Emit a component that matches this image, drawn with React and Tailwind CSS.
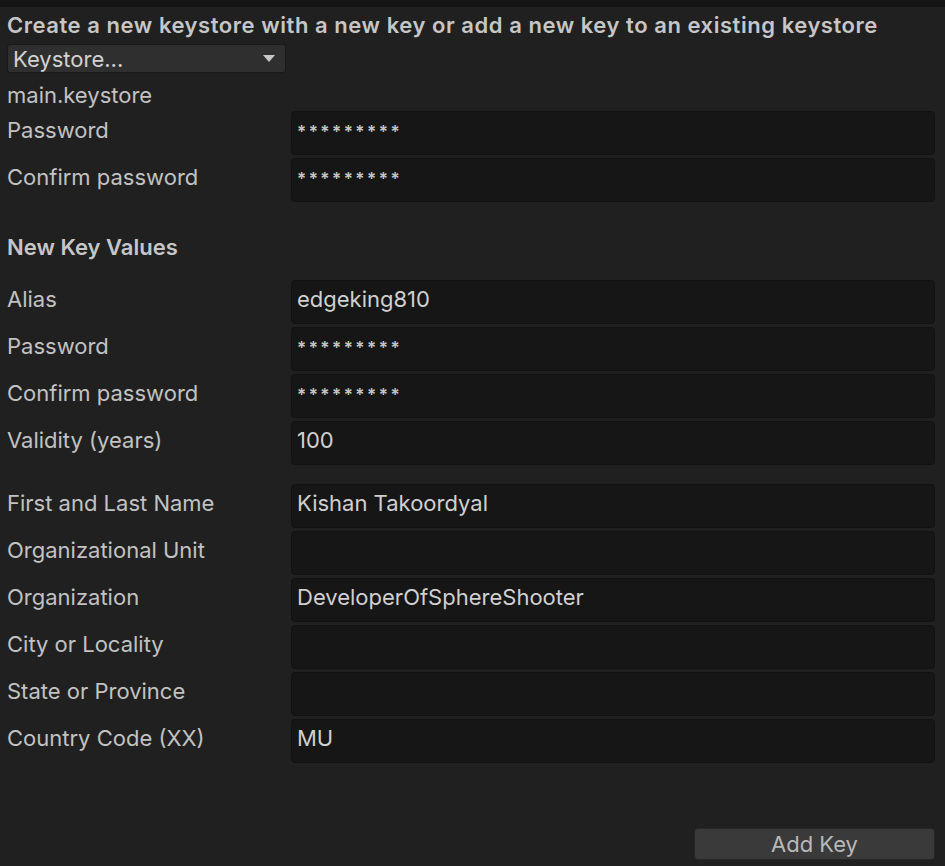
const Field = ({ label, value, mask }) => (
  <div className="flex h-[44px] mb-[3px]">
    <div className="w-[284px] shrink-0 pt-[4px] text-[22px] leading-[30px] text-[#c2c2c2]">{label}</div>
    <div className="flex-1 rounded-[4px] bg-[#161616] border border-[#121212] px-[5px] pt-[3px] text-[22px] leading-[30px] text-[#d0d0d0]">
      {mask ? <span className="text-[17px] font-semibold tracking-[2.5px] text-[#c4c4c4]">*********</span> : value}
    </div>
  </div>
);

const App = () => {
  return (
    <div className="w-[945px] h-[866px] bg-[#202020] font-['Inter','Liberation_Sans',sans-serif] flex flex-col">
      <div className="h-[7px] bg-[#141414]" />
      <div className="flex-1 flex flex-col pl-[7px] pr-[10px]">
        <div className="mt-[3px] h-[30px] text-[22px] leading-[30px] font-semibold tracking-[0.55px] text-[#c6c6c6]">
          Create a new keystore with a new key or add a new key to an existing keystore
        </div>
        <div className="mt-[4px] w-[279px] h-[29px] rounded-[3px] bg-[#2f2f2f] border border-[#1a1a1a] flex items-center justify-between pl-[5px] pr-[10px]">
          <span className="text-[22px] leading-[28px] text-[#d2d2d2]">Keystore...</span>
          <svg width="12" height="8" viewBox="0 0 12 8"><path d="M0 0 L12 0 L6 7 Z" fill="#c8c8c8" /></svg>
        </div>
        <div className="mt-[10px] h-[24px] text-[22px] leading-[24px] text-[#c2c2c2]">main.keystore</div>
        <div className="mt-[4px]">
          <Field label="Password" mask />
          <Field label="Confirm password" mask />
        </div>
        <div className="mt-[28px] h-[28px] text-[22px] leading-[28px] font-semibold text-[#c6c6c6]">New Key Values</div>
        <div className="mt-[19px]">
          <Field label="Alias" value="edgeking810" />
          <Field label="Password" mask />
          <Field label="Confirm password" mask />
          <Field label="Validity (years)" value="100" />
        </div>
        <div className="mt-[16px]">
          <Field label="First and Last Name" value="Kishan Takoordyal" />
          <Field label="Organizational Unit" value="" />
          <Field label="Organization" value="DeveloperOfSphereShooter" />
          <Field label="City or Locality" value="" />
          <Field label="State or Province" value="" />
          <Field label="Country Code (XX)" value="MU" />
        </div>
        <div className="flex-1" />
        <div className="flex justify-end mb-[6px]">
          <button className="w-[241px] h-[32px] rounded-[4px] bg-[#3a3a3a] border border-[#262626] text-[22px] leading-[30px] text-[#b8b8b8]">Add Key</button>
        </div>
      </div>
    </div>
  );
};

export default App;
